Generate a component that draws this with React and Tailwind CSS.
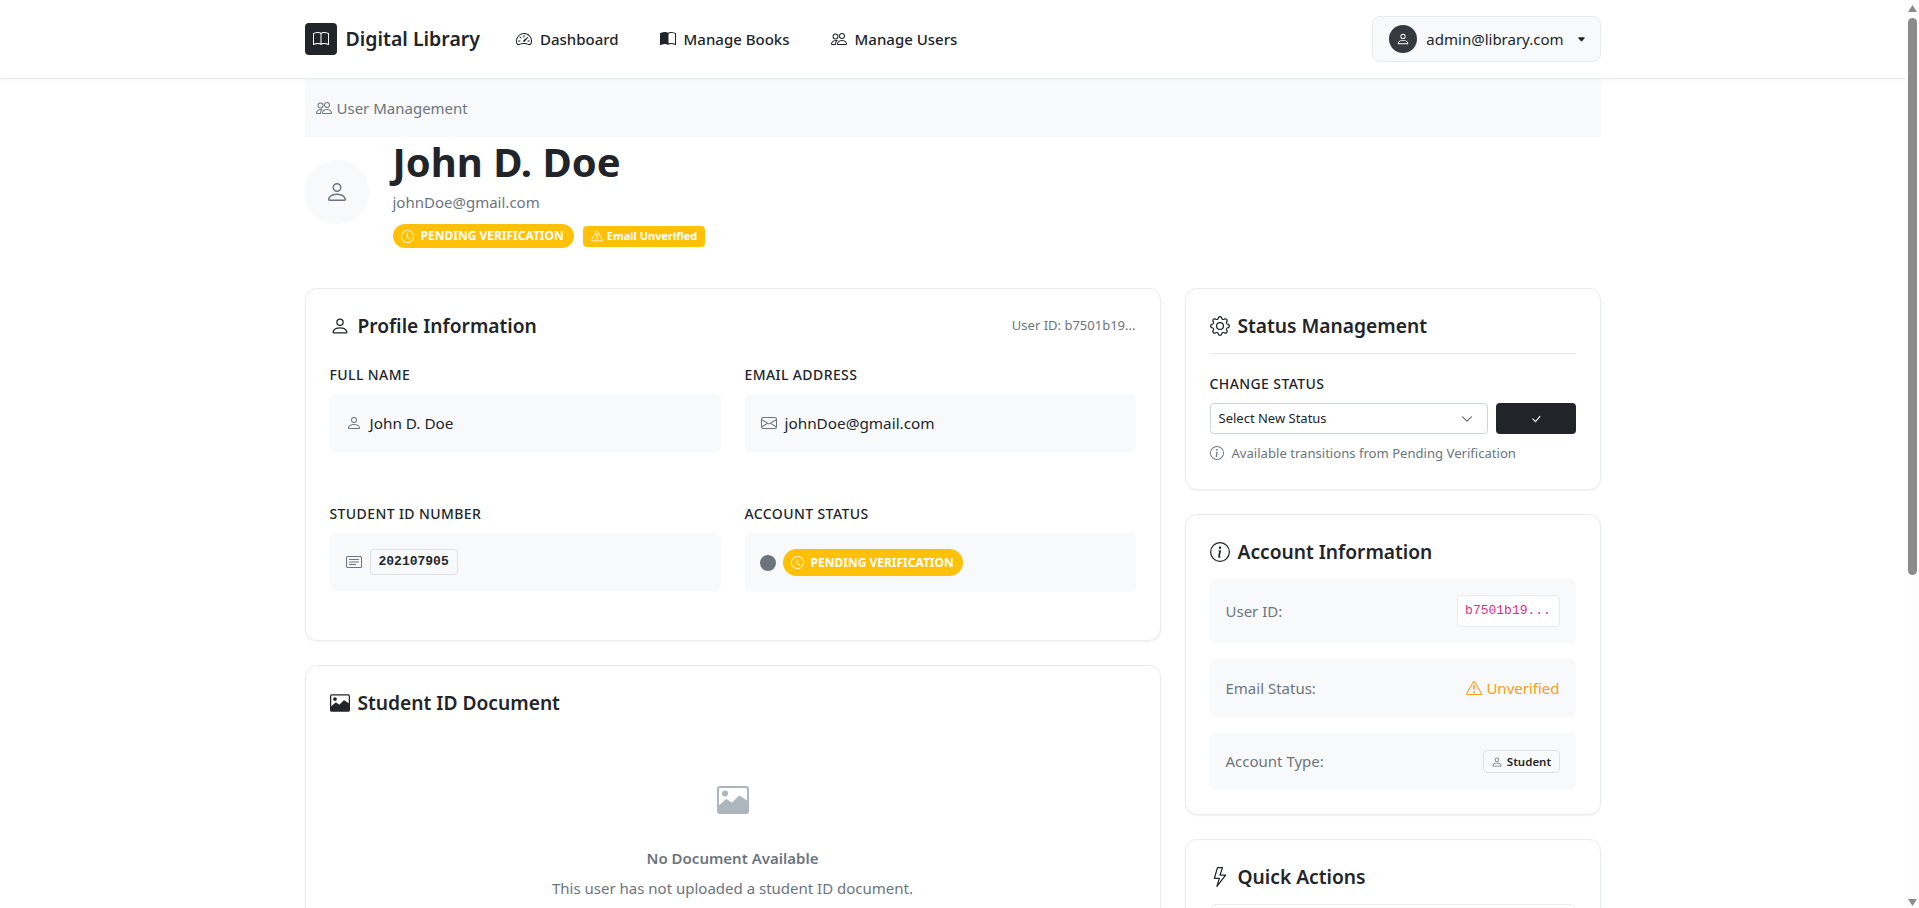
import {
  BsBook,
  BsSpeedometer2,
  BsBookHalf,
  BsPeople,
  BsPerson,
  BsEnvelope,
  BsCardText,
  BsClock,
  BsExclamationTriangle,
  BsGear,
  BsCheckLg,
  BsInfoCircle,
  BsLightning,
  BsChevronDown,
  BsCaretDownFill,
} from 'react-icons/bs';

const font = { fontFamily: '"Noto Sans", sans-serif' };
const mono = { fontFamily: '"Liberation Mono", monospace' };

const cardClass = 'rounded-xl border border-[#e9ecef] bg-white p-6 shadow-[0_1px_2px_rgba(0,0,0,0.05)]';
const headingClass = 'flex items-center gap-2 text-[19.2px] leading-[26px] font-semibold text-[#212529]';
const labelClass = 'text-[14px] leading-[20px] font-medium tracking-[0.4px] text-[#212529]';

// Framed picture icon with dark mountains, used for the document card
const PictureIcon = ({ width, height, className = '' }) => (
  <svg width={width} height={height} viewBox="0 0 16 14" className={className}>
    <path
      fill="currentColor"
      fillRule="evenodd"
      d="M1.5 0h13A1.5 1.5 0 0 1 16 1.5v11a1.5 1.5 0 0 1-1.5 1.5h-13A1.5 1.5 0 0 1 0 12.5v-11A1.5 1.5 0 0 1 1.5 0zM1 1.5V9.6l3.3-2.9a.5.5 0 0 1 .63-.04l2.5 1.7 3.4-3.4a.5.5 0 0 1 .6-.09L15 7.2V1.5a.5.5 0 0 0-.5-.5h-13a.5.5 0 0 0-.5.5zM5.5 3.8a1.5 1.5 0 1 1-3 0 1.5 1.5 0 0 1 3 0z"
    />
  </svg>
);

const NavLink = ({ icon: Icon, label }) => (
  <a className="flex items-center gap-2 text-[15px] font-medium text-[#212529]">
    <Icon size={16} />
    {label}
  </a>
);

const PendingBadge = ({ className = '' }) => (
  <span className={`inline-flex items-center gap-[7px] rounded-full bg-[#ffc107] text-[12px] font-bold text-white ${className}`}>
    <BsClock size={13} />
    PENDING VERIFICATION
  </span>
);

const Field = ({ label, icon: Icon, children, box = 'h-[58px]' }) => (
  <div>
    <div className={`mb-[9px] ${labelClass}`}>{label}</div>
    <div className={`flex items-center rounded-md bg-[#f8f9fa] px-4 text-[15.3px] text-[#212529] ${box}`}>
      {Icon && <Icon size={16} className="mr-2 text-[#6c757d]" />}
      {children}
    </div>
  </div>
);

const InfoRow = ({ label, children, className = '' }) => (
  <div className={`flex items-center justify-between rounded-md bg-[#f8f9fa] px-4 ${className}`}>
    <span className="text-[15px] text-[#6c757d]">{label}</span>
    {children}
  </div>
);

const App = () => {
  return (
    <div className="flex h-screen overflow-hidden bg-white" style={font}>
      <div className="min-w-0 flex-1 overflow-hidden">
        {/* Navbar */}
        <nav className="relative h-[79px] border-b border-[#e9ecef] bg-white shadow-[0_1px_3px_rgba(0,0,0,0.04)]">
          <div className="mx-auto flex h-[78px] w-[1296px] items-center">
            <div className="mr-[36px] flex items-center gap-[9px]">
              <span className="flex h-8 w-8 items-center justify-center rounded bg-[#212529] text-white">
                <BsBook size={16} />
              </span>
              <span className="text-[19.5px] font-semibold text-[#212529]">Digital Library</span>
            </div>
            <div className="flex items-center gap-[41px]">
              <NavLink icon={BsSpeedometer2} label="Dashboard" />
              <NavLink icon={BsBookHalf} label="Manage Books" />
              <NavLink icon={BsPeople} label="Manage Users" />
            </div>
            <button className="ml-auto flex h-[46px] items-center rounded-lg border border-[#e9ecef] bg-[#f8f9fa] pr-[14px] pl-4 text-[15px] text-[#212529]">
              <span className="mr-[9px] flex h-7 w-7 items-center justify-center rounded-full bg-[#343a40] text-white">
                <BsPerson size={14} />
              </span>
              admin@library.com
              <BsCaretDownFill size={9} className="ml-[13px]" />
            </button>
          </div>
        </nav>

        <main className="mx-auto w-[1296px]">
          {/* Breadcrumb */}
          <div className="flex h-[58px] items-center bg-[#f8f9fa] px-[11px] text-[15px] text-[#6c757d]">
            <BsPeople size={16} className="mr-[5px]" />
            User Management
          </div>

          {/* Header */}
          <div className="flex items-center">
            <div className="mr-[24px] mb-[2px] flex h-16 w-16 items-center justify-center rounded-full bg-[#f8f9fa] text-[#6c757d]">
              <BsPerson size={24} />
            </div>
            <div className="pt-[1px]">
              <h1 className="text-[40px] leading-[48px] font-bold text-[#212529]">John D. Doe</h1>
              <div className="mt-[4px] text-[15px] leading-[24px] text-[#6c757d]">johnDoe@gmail.com</div>
              <div className="mt-[10px] flex items-center gap-[9px]">
                <PendingBadge className="h-6 pr-[10px] pl-[8px]" />
                <span className="inline-flex h-[21px] items-center gap-[4px] rounded bg-[#ffc107] px-[8px] text-[11px] font-bold text-white">
                  <BsExclamationTriangle size={12} />
                  Email Unverified
                </span>
              </div>
            </div>
          </div>

          <div className="mt-10 flex items-start gap-6">
            {/* Left column */}
            <div className="w-[856px] shrink-0 space-y-6">
              <section className={`h-[353px] ${cardClass}`}>
                <div className="mb-[26px] flex items-center justify-between">
                  <h2 className={headingClass}>
                    <BsPerson size={20} />
                    Profile Information
                  </h2>
                  <span className="text-[13px] text-[#6c757d]">User ID: b7501b19...</span>
                </div>
                <div className="grid grid-cols-2 gap-x-6 gap-y-[52px]">
                  <Field label="FULL NAME" icon={BsPerson}>John D. Doe</Field>
                  <Field label="EMAIL ADDRESS" icon={BsEnvelope}>johnDoe@gmail.com</Field>
                  <Field label="STUDENT ID NUMBER" icon={BsCardText}>
                    <code className="rounded border border-[#dee2e6] bg-[#f8f9fa] px-2 py-[2px] text-[13px] font-bold text-[#212529]" style={mono}>
                      202107905
                    </code>
                  </Field>
                  <Field label="ACCOUNT STATUS" box="h-[59px]">
                    <span className="mr-[7px] -ml-[1px] h-4 w-4 rounded-full bg-[#6c757d]" />
                    <PendingBadge className="h-[27px] pr-[9px] pl-[8px]" />
                  </Field>
                </div>
              </section>

              <section className={`h-[400px] ${cardClass}`}>
                <h2 className={headingClass}>
                  <PictureIcon width={20} height={18} />
                  Student ID Document
                </h2>
                <div className="mt-[70px] flex flex-col items-center text-[#6c757d]">
                  <PictureIcon width={32} height={28} className="text-[#adb5bd]" />
                  <div className="mt-[33px] text-[15px] leading-[22px] font-semibold">No Document Available</div>
                  <div className="mt-[8px] text-[15px] leading-[22px]">This user has not uploaded a student ID document.</div>
                </div>
              </section>
            </div>

            {/* Right column */}
            <div className="flex-1 space-y-6">
              <section className={`h-[202px] ${cardClass}`}>
                <h2 className={`${headingClass} border-b border-[#e9ecef] pb-[14px]`}>
                  <BsGear size={20} />
                  Status Management
                </h2>
                <div className={`mt-[20px] ${labelClass}`}>CHANGE STATUS</div>
                <div className="mt-[9px] flex gap-2">
                  <div className="flex h-[31px] flex-1 items-center justify-between rounded border border-[#ced4da] bg-white px-2 text-[13px] text-[#212529]">
                    Select New Status
                    <BsChevronDown size={12} className="mr-[6px]" />
                  </div>
                  <button className="flex h-[31px] w-20 items-center justify-center rounded bg-[#212529] text-white">
                    <BsCheckLg size={12} />
                  </button>
                </div>
                <div className="mt-[9px] flex items-center gap-2 text-[13.1px] leading-[20px] text-[#6c757d]">
                  <BsInfoCircle size={14} />
                  Available transitions from Pending Verification
                </div>
              </section>

              <section className={`h-[301px] ${cardClass}`}>
                <h2 className={headingClass}>
                  <BsInfoCircle size={20} />
                  Account Information
                </h2>
                <div className="mt-[14px] space-y-4">
                  <InfoRow label="User ID:" className="h-[64px]">
                    <code className="flex h-8 w-[103px] items-center justify-center rounded border border-[#e9ecef] bg-white text-[13px] text-[#d63384]" style={mono}>
                      b7501b19...
                    </code>
                  </InfoRow>
                  <InfoRow label="Email Status:" className="h-[58px]">
                    <span className="flex items-center gap-1 text-[15px] text-[#fd9a1a]">
                      <BsExclamationTriangle size={16} />
                      Unverified
                    </span>
                  </InfoRow>
                  <InfoRow label="Account Type:" className="h-[57px]">
                    <span className="flex h-[23px] w-[77px] items-center justify-center gap-1 rounded border border-[#dee2e6] bg-[#f8f9fa] text-[11.5px] font-semibold text-[#212529]">
                      <BsPerson size={12} className="text-[#6c757d]" />
                      Student
                    </span>
                  </InfoRow>
                </div>
              </section>

              <section className={`h-[300px] ${cardClass}`}>
                <h2 className={headingClass}>
                  <BsLightning size={20} />
                  Quick Actions
                </h2>
                <div className="mt-[14px] h-[46px] rounded-md border border-[#e9ecef]" />
              </section>
            </div>
          </div>
        </main>
      </div>

      {/* Window scrollbar */}
      <div className="flex w-[14px] shrink-0 flex-col bg-[#fdfdfd] pr-[2px] pl-[3px]">
        <svg width="9" height="18" viewBox="0 0 9 18" className="shrink-0 text-[#8b8b8b]">
          <path d="M4.5 5 L9 12 L0 12 Z" fill="currentColor" />
        </svg>
        <div className="h-[557px] w-[9px] rounded-full bg-[#8b8b8b]" />
        <svg width="9" height="8" viewBox="0 0 9 8" className="mt-auto mb-[1px] shrink-0 text-[#8b8b8b]">
          <path d="M0 0 L9 0 L4.5 7 Z" fill="currentColor" />
        </svg>
      </div>
    </div>
  );
};

export default App;
